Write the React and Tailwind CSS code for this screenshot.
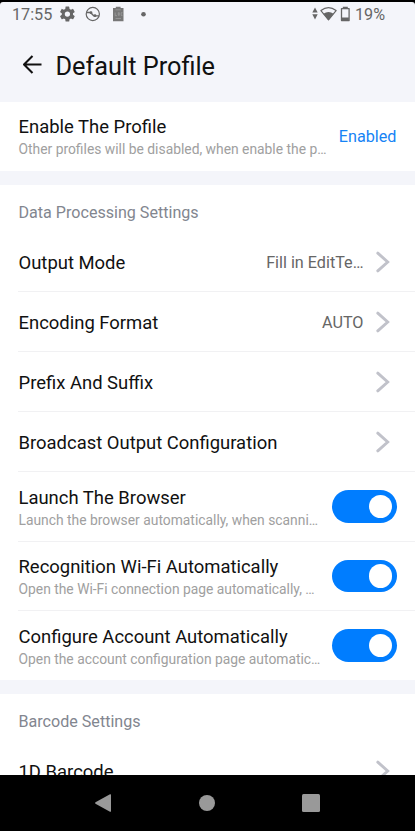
const Divider = () => <div className="ml-[18px] h-px shrink-0 bg-[#f1f1f3]" />;

function Chevron() {
  return (
    <svg className="ml-[12px] mr-[6px] h-[22px] w-[15px] shrink-0" viewBox="0 0 15 22" fill="none" stroke="#c1c2ca" strokeWidth="2.900" strokeLinecap="round">
      <path d="M1.800 2.100 11.700 11 1.800 19.900" />
    </svg>
  );
}

function LinkRow({ title, value }) {
  return (
    <div className="flex h-[59px] shrink-0 items-center pl-[18.5px] pr-[18.5px]">
      <div className="grow whitespace-nowrap pt-[2px] text-[18.450px] leading-6 text-[#111]">{title}</div>
      <div className="whitespace-nowrap pt-[2px] text-[16.2px] leading-6 text-[#666]">{value}</div>
      <Chevron />
    </div>
  );
}

function TextPair({ title, text }) {
  return (
    <div className="grow whitespace-nowrap">
      <div className="text-[18.450px] leading-[23px] text-[#111]">{title}</div>
      <div className="text-[13.850px] leading-5 text-[#a0a0a0]">{text}</div>
    </div>
  );
}

function SwitchRow({ title, text }) {
  return (
    <div className="flex h-[68.5px] shrink-0 items-center pl-[18.5px] pr-[18.5px]">
      <div className="grow pt-[3.5px]">
        <TextPair title={title} text={text} />
      </div>
      <div className="flex h-[32.5px] w-[64.5px] shrink-0 items-center justify-end rounded-full bg-[#007dff] pr-[4.5px]">
        <div className="size-[23.5px] rounded-full bg-white" />
      </div>
    </div>
  );
}

export default function App() {
  return (
    <div className="flex h-[831px] w-[415px] flex-col overflow-hidden bg-black font-[Roboto,sans-serif]">
      <div className="mt-[2px] flex h-[773px] shrink-0 flex-col overflow-hidden rounded-t-[3px] bg-[#f4f5fa]">
        <div className="flex h-[26px] shrink-0 items-center pl-[12px] pr-[30px] text-[16.2px] text-[#666]">
          <span className="w-[47px] shrink-0 whitespace-nowrap">17:55</span>
          <svg className="h-[18px] w-[95px] shrink-0" viewBox="0 0 95 18" fill="none">
            <g fill="#666" transform="translate(-.6 -.9) scale(.75)">
              <path d="M19.43 12.98c.04-.32.07-.64.07-.98s-.03-.66-.07-.98l2.11-1.65c.19-.15.24-.42.12-.64l-2-3.46c-.12-.22-.39-.3-.61-.22l-2.49 1c-.52-.4-1.08-.73-1.69-.98l-.38-2.65A.49.49 0 0 0 14 2h-4c-.25 0-.46.18-.49.42l-.38 2.65c-.61.25-1.17.59-1.69.98l-2.49-1c-.23-.09-.49 0-.61.22l-2 3.46c-.13.22-.07.49.12.64l2.11 1.65c-.04.32-.07.65-.07.98s.03.66.07.98l-2.11 1.65c-.19.15-.24.42-.12.64l2 3.46c.12.22.39.3.61.22l2.49-1c.52.4 1.08.73 1.69.98l.38 2.65c.03.24.24.42.49.42h4c.25 0 .46-.18.49-.42l.38-2.65c.61-.25 1.17-.59 1.69-.98l2.49 1c.23.09.49 0 .61-.22l2-3.46c.12-.22.07-.49-.12-.64zM12 15.500a3.500 3.500 0 1 1 0-7 3.500 3.500 0 0 1 0 7" />
            </g>
            <circle cx="33.800" cy="8" r="6.600" stroke="#666" strokeWidth="1.200" />
            <path d="M27.300 6.500h4.200l3.200 3.300h5.400" stroke="#666" strokeWidth="1.300" />
            <circle cx="32" cy="6.700" r="1.400" fill="#666" />
            <circle cx="36" cy="9.700" r="1.400" fill="#666" />
            <path d="M54 2h2.800V.8h4.800V2h2.900v13.200H54z" fill="#777" />
            <path d="M56.500 3.800h5.400M56.200 6.500v3.200h1.800M59.300 6.700h1v2.600h-1zM63.500 6.700h-1.300v2.700h1.300M56.500 12.500h5.500" stroke="#aaa" strokeWidth=".6" />
            <circle cx="84.500" cy="8.200" r="2.300" fill="#666" />
          </svg>
          <div className="grow" />
          <svg className="mr-[4.500px] h-[18px] w-[39px] shrink-0" viewBox="0 0 39 18" fill="none">
            <path d="M4 1.500 6.700 6.600H1.300zM4 13.400 1.300 8.300h5.400z" fill="#666" />
            <path d="M9.900 4.600q7.600-5.800 15.200 0L17.500 13.900z" stroke="#666" strokeWidth="1.200" strokeLinejoin="round" />
            <path d="M12.400 7.700q5.100-3.500 10.200 0L17.500 14.300z" fill="#666" />
            <path d="M31.800.8h5v2h-5z" fill="#666" />
            <path d="M30.500 2.600h7.600v12h-7.600z" stroke="#666" strokeWidth="1.300" strokeLinejoin="round" />
            <path d="M30.700 11.500h7.200v3.200h-7.200z" fill="#666" />
          </svg>
          <span className="whitespace-nowrap">19%</span>
        </div>
        <div className="flex h-[74px] shrink-0 items-center pl-[21px]">
          <svg className="mr-[13.5px] h-[20px] w-[21px]" viewBox="0 0 21 20" fill="none" stroke="#111" strokeWidth="2.100" strokeLinejoin="round">
            <path d="M20.500 9.500H3M11.500 1 3 9.500l8.500 8.500" />
          </svg>
          <h1 className="whitespace-nowrap pt-[3px] text-[25.3px] text-[#111]">Default Profile</h1>
        </div>
        <div className="flex h-[69px] shrink-0 items-center bg-white pl-[18.5px] pr-[18.5px]">
          <div className="grow pt-[2px]">
            <TextPair title="Enable The Profile" text="Other profiles will be disabled, when enable the p…" />
          </div>
          <div className="pt-[2px] text-[16.2px] text-[#1683f5]">Enabled</div>
        </div>
        <div className="mt-[14px] flex h-[495px] shrink-0 flex-col bg-white">
          <h2 className="h-[47px] shrink-0 pl-[18.5px] pt-[16px] text-[16.1px] leading-6 text-[#82868f]">Data Processing Settings</h2>
          <LinkRow title="Output Mode" value="Fill in EditTe…" />
          <Divider />
          <LinkRow title="Encoding Format" value="AUTO" />
          <Divider />
          <LinkRow title="Prefix And Suffix" />
          <Divider />
          <LinkRow title="Broadcast Output Configuration" />
          <Divider />
          <SwitchRow title="Launch The Browser" text="Launch the browser automatically, when scanni…" />
          <Divider />
          <SwitchRow title="Recognition Wi-Fi Automatically" text="Open the Wi-Fi connection page automatically, …" />
          <Divider />
          <SwitchRow title="Configure Account Automatically" text="Open the account configuration page automatic…" />
        </div>
        <div className="mt-[14px] flex shrink-0 flex-col bg-white">
          <h2 className="h-[47px] shrink-0 pl-[18.5px] pt-[16px] text-[16.1px] leading-6 text-[#82868f]">Barcode Settings</h2>
          <LinkRow title="1D Barcode" />
        </div>
      </div>
      <div className="flex h-[56px] shrink-0 items-center justify-center gap-[87px] pr-[1.500px]">
        <svg className="h-[20px] w-[18px]" viewBox="0 0 18 20" fill="#999">
          <path d="M16 1.300Q17 .8 17 2v16q0 1.200-1 .7L1.500 10.700q-1-.7 0-1.400z" />
        </svg>
        <div className="size-[16.500px] rounded-full bg-[#999]" />
        <div className="size-[17.500px] rounded-[1.500px] bg-[#999]" />
      </div>
    </div>
  );
}
